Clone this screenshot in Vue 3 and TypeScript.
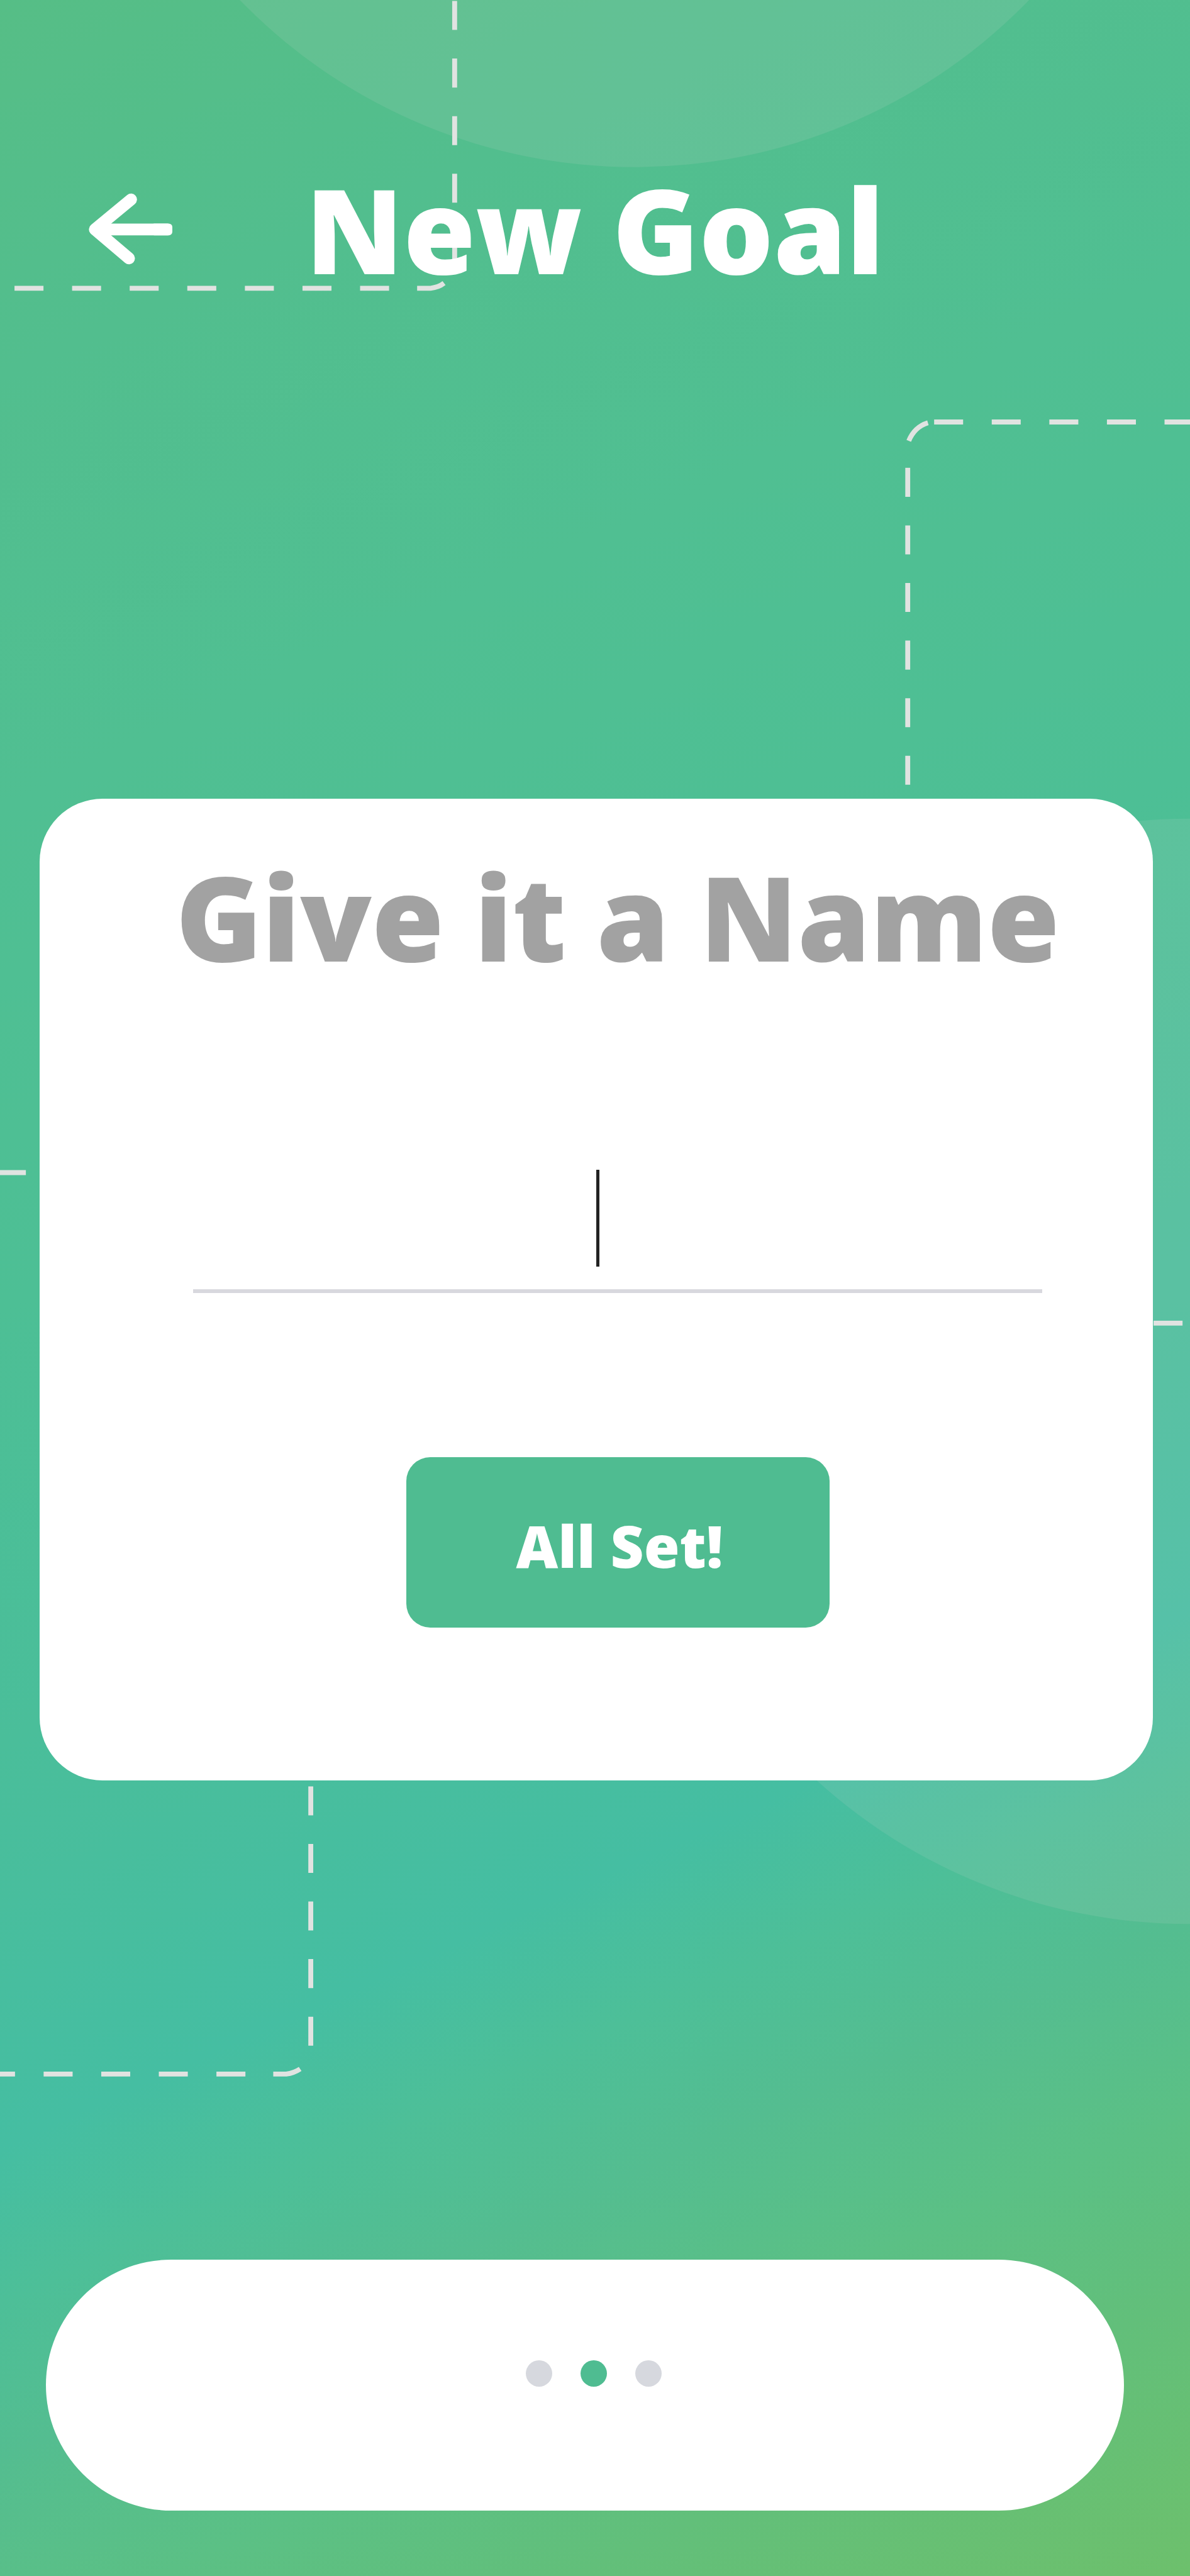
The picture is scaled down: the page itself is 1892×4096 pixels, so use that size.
<script setup lang="ts">
import { ref } from 'vue'

const goalName = ref('')
const steps = ['Choose a goal', 'Name the goal', 'Confirm']
const activeStep = 1
</script>

<template>
  <div class="page">
    <svg class="backdrop" viewBox="0 0 2300 4978" preserveAspectRatio="xMinYMin slice" aria-hidden="true">
      <g fill="#e6dede" fill-opacity="0.11">
        <circle cx="1226" cy="-739" r="1062" />
        <circle cx="2296" cy="2650" r="1068" />
      </g>
      <g fill="none" stroke="#e1e3e1" stroke-width="9.5" stroke-dasharray="56 55.3">
        <path d="M28 557H770" />
        <path d="M806 557H832Q848 555 858 547" stroke-dasharray="none" />
        <path d="M878.5 503V0" />
        <path d="M1756 852Q1767 825 1793 817" stroke-dasharray="none" />
        <path d="M1754 904V1530" />
        <path d="M1805 815.5H2300" />
        <path d="M-6 2266H60" />
        <path d="M2229 2557H2300" />
        <path d="M600.5 3452V3960" />
        <path d="M-27 4008H480" />
        <path d="M528 4008H553Q568 4006 580 3998" stroke-dasharray="none" />
      </g>
    </svg>

    <header class="header">
      <button class="back" type="button" aria-label="Back">
        <svg viewBox="0 0 162 138" fill="none" stroke="#fff" stroke-width="23" stroke-linecap="round" stroke-linejoin="round">
          <path d="M82 12L12 70L78 126" />
          <path d="M14 70H154" stroke-linecap="butt" />
          <rect x="120" y="58.5" width="42" height="23" rx="7" fill="#fff" stroke="none" />
        </svg>
      </button>
      <h1 class="title">New Goal</h1>
    </header>

    <main class="card">
      <label class="prompt" for="goal-name">Give it a Name</label>
      <div class="field">
        <input id="goal-name" v-model="goalName" class="input" type="text" autocomplete="off" />
        <span v-if="!goalName" class="caret"></span>
      </div>
      <button class="submit" type="button">All Set!</button>
    </main>

    <nav class="steps" aria-label="Steps">
      <button
        v-for="(step, i) in steps"
        :key="step"
        class="dot"
        :class="{ active: i === activeStep }"
        type="button"
        :aria-label="step"
      ></button>
    </nav>
  </div>
</template>

<style>
body {
  margin: 0;
}
</style>

<style scoped>
.page {
  position: relative;
  display: flex;
  flex-direction: column;
  box-sizing: border-box;
  min-height: 100vh;
  padding: 264px 0 104px;
  overflow: hidden;
  font-family: 'Open Sans', 'Noto Sans', sans-serif;
  font-weight: 800;
  background: linear-gradient(
    155.7deg,
    #56be86 0%,
    #52be8e 12%,
    #50bf92 26%,
    #4dbf95 42%,
    #4abe9a 56%,
    #45bea2 69%,
    #4dbf98 74%,
    #54bd90 79%,
    #5bc085 85%,
    #62bf7a 91%,
    #6dc06c 100%
  );
}

.backdrop {
  position: absolute;
  inset: 0;
  width: 100%;
  height: 100%;
}

.header,
.card,
.steps {
  position: relative;
}

.header {
  display: grid;
  grid-template-columns: 1fr auto 1fr;
  align-items: center;
  height: 200px;
  padding: 0 141px;
}

.back {
  width: 133px;
  height: 114px;
  padding: 0;
  border: 0;
  background: none;
}

.back svg {
  display: block;
  width: 100%;
  height: 100%;
}

.title {
  margin: 0;
  color: #fff;
  font-size: 186px;
  font-weight: 800;
  line-height: 200px;
  white-space: nowrap;
}

.card {
  display: flex;
  flex-direction: column;
  align-items: center;
  box-sizing: border-box;
  margin: 806px 59px 0 63px;
  padding: 87px 176px 243px 244px;
  border-radius: 100px;
  background: #fff;
}

.prompt {
  color: #a2a2a2;
  font-size: 186px;
  line-height: 200px;
  white-space: nowrap;
}

.field {
  position: relative;
  align-self: stretch;
  margin-top: 265px;
}

.input {
  display: block;
  box-sizing: border-box;
  width: 100%;
  height: 234px;
  padding: 0;
  border: 0;
  border-bottom: 6px solid #d8d8de;
  border-radius: 0;
  outline: none;
  background: none;
  color: #222;
  font: inherit;
  font-size: 120px;
  text-align: center;
}

.caret {
  position: absolute;
  top: 38px;
  left: calc(50% - 34px);
  width: 5px;
  height: 154px;
  background: #222;
  pointer-events: none;
}

.submit {
  width: 673px;
  height: 271px;
  margin-top: 261px;
  padding: 10px 0 0 6px;
  border: 0;
  border-radius: 38px;
  background: #4fbc91;
  color: #fff;
  font: inherit;
  font-size: 92px;
}

.steps {
  display: flex;
  justify-content: center;
  gap: 45px;
  box-sizing: border-box;
  height: 399px;
  margin: auto 105px 0 73px;
  padding: 160px 0 0 28px;
  border-radius: 200px;
  background: #fff;
}

.dot {
  width: 42px;
  height: 42px;
  padding: 0;
  border: 0;
  border-radius: 50%;
  background: #d6d8de;
}

.dot.active {
  background: #4fbc91;
}
</style>
